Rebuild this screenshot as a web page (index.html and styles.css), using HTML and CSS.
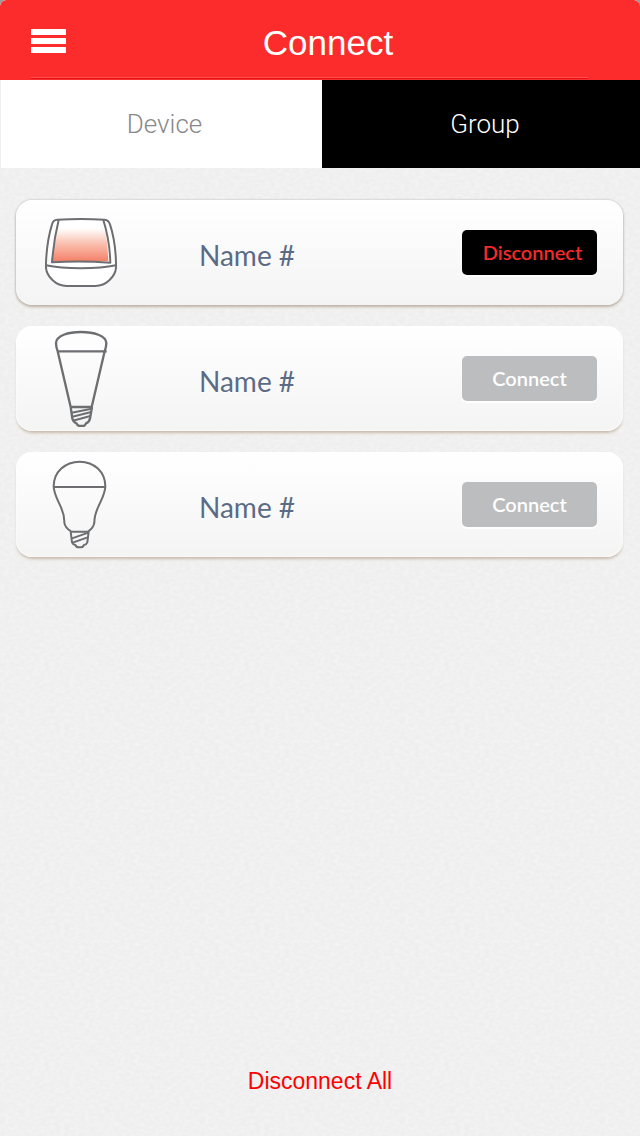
FILE: index.html
```
<!DOCTYPE html>
<html lang="en">

<head>
    <meta charset="UTF-8">
    <meta name="viewport" content="width=device-width, initial-scale=1.0">
    <title>Connect</title>
    <link rel="stylesheet" href="styles.css">
</head>

<body>
    <!-- Top bar -->
    <header class="topbar">
        <button class="menu" type="button" aria-label="Menu">
            <span class="bar"></span>
            <span class="bar"></span>
            <span class="bar"></span>
        </button>
        <h1 class="title">Connect</h1>
    </header>

    <!-- Device / Group switch -->
    <nav class="tabs">
        <a class="tab" href="#device">Device</a>
        <a class="tab active" href="#group">Group</a>
    </nav>

    <!-- List of lights -->
    <main class="devices">
        <section class="card outlined">
            <div class="icon">
                <svg width="72" height="69" viewBox="45 39 216 207">
                    <defs>
                        <linearGradient id="glow" x1="0" y1="0" x2="0" y2="1">
                            <stop offset="0.2" stop-color="#fff" />
                            <stop offset="0.6" stop-color="#f9bba9" />
                            <stop offset="1" stop-color="#f47f68" />
                        </linearGradient>
                    </defs>
                    <path class="fill" d="M79 44Q153 40 226 44Q252 100 258 176Q262 210 238 228Q220 243 200 243H106Q86 243 68 228Q44 210 48 176Q52 100 79 44Z" />
                    <path fill="url(#glow)" d="M86 45H220Q232 100 235 169Q153 167 67 170Q72 100 86 45Z" />
                    <path class="line" d="M48 176Q50 110 66 58Q69 45 82 44Q153 40 224 44Q236 45 240 58Q257 110 258 176Q261 205 238 226Q220 243 196 243H110Q86 243 68 226Q45 205 48 176Z" />
                    <path class="line" d="M86 45Q71 105 66 172Q153 167 241 173Q239 105 220 45" />
                    <path class="line" d="M48 181Q90 190 153 190Q216 190 258 181" />
                </svg>
            </div>
            <h2 class="name">Name #</h2>
            <button class="action disconnect" type="button">Disconnect</button>
        </section>

        <section class="card">
            <div class="icon">
                <svg width="54" height="97" viewBox="42 27 162 291">
                    <path class="line heavy" d="M92 258L53 91Q48 77 48 66C49 44 84 33 123 33S198 44 199 66Q199 77 194 91L155 258" />
                    <path class="line heavy" d="M51 91H200M90 258H157" />
                    <path class="line heavy" d="M92 258L97 293Q101 304 109 307Q113 315 119 315H129Q135 315 138 307Q147 304 150 293L156 258" />
                    <path class="line" d="M95 275L155 263M97 287L154 273M99 299L151 285" />
                </svg>
            </div>
            <h2 class="name">Name #</h2>
            <button class="action" type="button">Connect</button>
        </section>

        <section class="card">
            <div class="icon">
                <svg width="58" height="89" viewBox="36 33 174 267">
                    <path class="line" d="M93 247Q75 236 73 221Q74 199 62 173C50 147 41 132 41 112C41 68 76 38 119 38S196 68 196 112C196 132 187 147 175 173Q163 199 163 221Q161 236 145 247" />
                    <path class="line" d="M41 114H196M91 248H147" />
                    <path class="line" d="M92 248L96 280Q99 287 106 288Q109 295 116 295H123Q129 295 132 288Q139 287 142 280L146 248" />
                    <path class="line" d="M96 268L145 251M98 281L143 265" />
                </svg>
            </div>
            <h2 class="name">Name #</h2>
            <button class="action" type="button">Connect</button>
        </section>
    </main>

    <footer class="bottom">
        <button class="disconnect-all" type="button">Disconnect All</button>
    </footer>
</body>

</html>
```
FILE: styles.css
```
/* styles.css */
* {
    padding: 0;
    margin: 0;
    box-sizing: border-box;
}

html {
    background: #999;
}

/* Paper texture behind the whole page */
body {
    display: flex;
    flex-direction: column;
    min-height: 100vh;
    border-radius: 6px 6px 0 0;
    background-color: #eee;
    background-image: url("data:image/svg+xml,%3Csvg xmlns='http://www.w3.org/2000/svg' width='200' height='200'%3E%3Cfilter id='p' x='0' y='0' width='1' height='1'%3E%3CfeTurbulence type='fractalNoise' baseFrequency='.2 .3' numOctaves='2' stitchTiles='stitch'/%3E%3CfeColorMatrix values='0 0 0 0 1 0 0 0 0 1 0 0 0 0 1 .6 0 0 0 -.18'/%3E%3C/filter%3E%3Crect width='200' height='200' filter='url(%23p)'/%3E%3C/svg%3E");
    font-family: "Liberation Sans", Arial, sans-serif;
}

button {
    border: none;
    background: transparent;
    cursor: pointer;
}

/* Top bar */
.topbar {
    display: grid;
    grid-template-columns: 80px 1fr 64px;
    align-items: center;
    height: 80px;
    border-radius: 6px 6px 0 0;
    background: linear-gradient(#e30f13, #e30f13) 31px 78px / 87% 1px no-repeat,
        linear-gradient(#ff5050, #ff5050) 31px 77px / 87% 1px no-repeat,
        #fd2c2c;
}

.menu {
    display: flex;
    flex-direction: column;
    gap: 3px;
    width: 35px;
    margin-left: 31px;
    padding-top: 2px;
}

.bar {
    height: 6px;
    background: #fff;
}

.title {
    padding-top: 5px;
    color: #fff;
    font-size: 35px;
    font-weight: 400;
    line-height: 40px;
    text-align: center;
}

/* Tabs */
.tabs {
    display: grid;
    grid-template-columns: 1fr 1fr;
    height: 88px;
}

.tab {
    display: flex;
    justify-content: center;
    align-items: center;
    padding-left: 8px;
    border-left: 1px solid #f0f0f0;
    background: #fff;
    color: #888;
    font-family: Roboto, "Liberation Sans", sans-serif;
    font-size: 26px;
    font-weight: 300;
    text-decoration: none;
}

.tab.active {
    border-left: 2px solid #fff;
    background: #000;
    color: #fff;
}

/* Cards */
.devices {
    display: flex;
    flex-direction: column;
    gap: 21px;
    padding: 32px 17px 32px 16px;
}

.card {
    display: grid;
    grid-template-columns: 72px 1fr 135px;
    column-gap: 82px;
    align-items: center;
    height: 105px;
    padding: 0 26px 0 29px;
    border-radius: 16px;
    background: linear-gradient(#fff, #f4f4f4);
    box-shadow: 0 3px 3px -1px #c8bbaa, inset 0 0 3px #fff;
}

.card.outlined {
    box-shadow: 0 0 2px #b0aca6, 0 2px 3px #c2b5a6;
}

.icon {
    display: flex;
    justify-content: center;
}

.line {
    fill: none;
    stroke: #6d6e71;
    stroke-width: 6;
    stroke-linejoin: round;
}

.line.heavy {
    stroke-width: 7;
}

.fill {
    fill: #fff;
}

.name {
    padding-top: 5px;
    color: #5b6b85;
    font-family: Lato, "Noto Sans", sans-serif;
    font-size: 28px;
    font-weight: 400;
    line-height: 34px;
    text-shadow: 0 1px 0 #fff;
    white-space: nowrap;
}

.action {
    height: 45px;
    padding-bottom: 2px;
    border-radius: 5px;
    background: #bbbdbf;
    box-shadow: 0 2px 0 #fff;
    color: #fff;
    font-family: Lato, "Noto Sans", sans-serif;
    font-size: 20px;
    font-weight: 600;
}

.action.disconnect {
    padding-left: 6px;
    background: #000;
    color: #f52a2a;
}

/* Footer */
.bottom {
    display: flex;
    justify-content: center;
    margin-top: auto;
    padding-bottom: 41px;
}

.disconnect-all {
    color: #f00;
    font-family: "Liberation Sans", Arial, sans-serif;
    font-size: 23px;
    line-height: 28px;
}
```
